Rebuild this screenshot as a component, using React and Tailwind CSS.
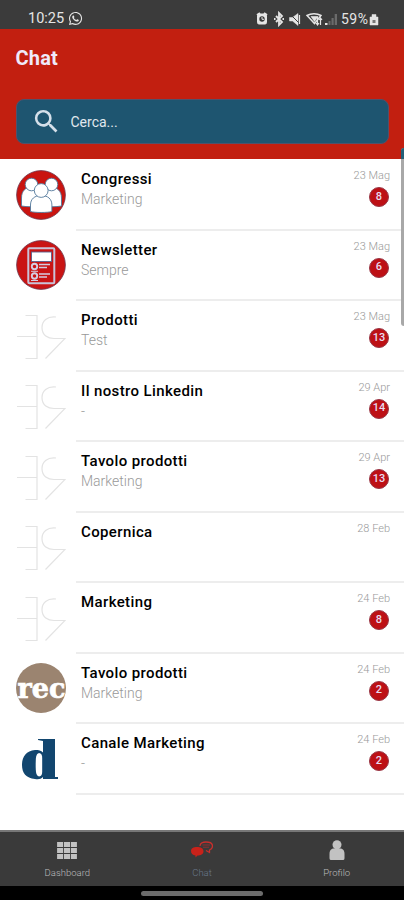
import { useState } from 'react';
import { FaWhatsapp } from 'react-icons/fa';
import { MdSearch } from 'react-icons/md';

const chats = [
  { id: 1, title: 'Congressi', subtitle: 'Marketing', date: '23 Mag', unread: 8, avatar: 'people' },
  { id: 2, title: 'Newsletter', subtitle: 'Sempre', date: '23 Mag', unread: 6, avatar: 'newsletter' },
  { id: 3, title: 'Prodotti', subtitle: 'Test', date: '23 Mag', unread: 13 },
  { id: 4, title: 'Il nostro Linkedin', subtitle: '-', date: '29 Apr', unread: 14 },
  { id: 5, title: 'Tavolo prodotti', subtitle: 'Marketing', date: '29 Apr', unread: 13 },
  { id: 6, title: 'Copernica', subtitle: '', date: '28 Feb', unread: 0 },
  { id: 7, title: 'Marketing', subtitle: '', date: '24 Feb', unread: 8 },
  { id: 8, title: 'Tavolo prodotti', subtitle: 'Marketing', date: '24 Feb', unread: 2, avatar: 'rec' },
  { id: 9, title: 'Canale Marketing', subtitle: '-', date: '24 Feb', unread: 2, avatar: 'd' },
];

const PeopleAvatar = () => (
  <svg viewBox="0 0 50 50" className="h-[50px] w-[50px]">
    <circle cx="25" cy="25" r="24.4" fill="#c91410" stroke="#6d3a50" strokeWidth="0.8" />
    <g fill="#fff" stroke="#52789b" strokeWidth="0.9">
      <path d="M5.500 36v-8c0-7 4-11 10-11s10 4 10 11v8c-5 1-15 1-20 0z" />
      <circle cx="15.5" cy="14.5" r="6.3" />
      <path d="M25 36v-8c0-7 4-11 10-11s10.500 4 10.500 11v8c-5 1-15 1-20.500 0z" />
      <circle cx="35.5" cy="14.5" r="6.3" />
      <path d="M14.500 41.500V35c0-6 4-9.500 10.700-9.500s10.700 3.500 10.700 9.500v6.500c-4 1.300-17.400 1.300-21.400 0z" />
      <circle cx="25.2" cy="20.5" r="6.9" />
    </g>
  </svg>
);

const NewsletterAvatar = () => (
  <svg viewBox="0 0 50 50" className="h-[50px] w-[50px]">
    <circle cx="25" cy="25" r="24.4" fill="#c91414" stroke="#6d3a50" strokeWidth="0.8" />
    <rect x="12.3" y="8.3" width="26" height="35" rx="1" fill="#c91414" stroke="#c9c3d8" strokeWidth="2" />
    <rect x="15.5" y="12" width="20" height="9.5" fill="#fff" stroke="#59618c" strokeWidth="0.9" />
    <g fill="none" stroke="#d5cce0" strokeWidth="1.9">
      <circle cx="18.5" cy="26.5" r="2.7" />
      <circle cx="18.5" cy="36" r="2.7" />
      <path d="M23 24.500h11M23 27.500h8M23 34h11M23 37h8" strokeWidth="1.7" />
      <path d="M15 31.300h7M15 40.500h7" strokeWidth="1" />
    </g>
  </svg>
);

const DefaultAvatar = () => (
  <svg viewBox="0 0 50 50" className="h-[50px] w-[50px]" fill="none" stroke="#e3e3e3" strokeWidth="1.2">
    <path d="M9.500 4.500h11.500v43H9.500M1 25.500h20" />
    <path d="M40 6c-9-1-14 4-14 10.500 0 8 6 11 12 11h11L29.500 47.500" />
  </svg>
);

const RecAvatar = () => (
  <svg viewBox="0 0 50 50" className="h-[50px] w-[50px]">
    <circle cx="25" cy="25" r="25" fill="#9b8470" />
    <text x="1.5" y="35" textLength="48" lengthAdjust="spacingAndGlyphs" fill="#fff" stroke="#fff" strokeWidth="0.7" className="font-['DejaVu_Serif',serif] text-[27px] font-bold">
      rec
    </text>
  </svg>
);

const LetterAvatar = () => (
  <svg viewBox="0 0 50 50" className="h-[50px] w-[50px]">
    <g fill="#12466f">
      <path d="M22 5h17v38h3v2H27v-2c-2 2-4 2.500-8 2C10 44 6 39 6 31s4-14 13-15c4 0 6 .500 8 2.500V7l-5-1z" />
      <path d="M23 19c-3 1-3.300 4-3.300 12s.500 10.500 3.300 11.500c2.500-.500 3.200-2 3.200-5V24c0-3-.800-4.500-3.200-5z" fill="#fff" />
    </g>
  </svg>
);

const avatars = {
  people: PeopleAvatar,
  newsletter: NewsletterAvatar,
  rec: RecAvatar,
  d: LetterAvatar,
};

const StatusIcons = () => (
  <svg viewBox="0 0 124 16" className="h-4 w-[124px]">
    <g fill="#e5e5e5" stroke="#e5e5e5">
      <path d="M1 4l3-2M11 4L8 2" strokeWidth="2" />
      <rect x="1.5" y="3" width="9" height="10" rx="1.5" />
      <circle cx="6" cy="8" r="2.7" fill="#383838" stroke="none" />
      <path d="M6 6v2.300h2" fill="none" strokeWidth="1" />
      <path d="M20 5l6 6-3 3V2l3 3-6 6M18 8h1.500M26.500 8H28" fill="none" strokeWidth="1.8" />
      <path d="M33.500 6.500h3l5.500-4v12l-5.500-4.500h-3z" strokeWidth="0.5" />
      <path d="M33 2l11 11" stroke="#3b3b3b" strokeWidth="1" />
      <path d="M43.500 4v9" fill="none" strokeWidth="1.2" />
      <path d="M51 4.500c4-2.500 10-2.500 14 0l-6.500 8z" fill="none" strokeWidth="1.5" />
      <path d="M55 5.500h7l-3.500 5z" strokeWidth="0.6" />
      <path d="M61.500 6v8M60 12l1.500 2 1.500-2M64.500 14V7M63 9l1.500-2L66 9" fill="none" strokeWidth="1.2" />
      <path d="M69 14v-2h2.500v2z" stroke="none" />
      <path d="M72.500 14v-4h2v4zM75.500 14V7h2.200v7zM78.700 14V3H81v11z" fill="#6b6b6b" stroke="none" />
      <path d="M114 6h2V3.500h4V6h2v8h-8z" strokeWidth="0.5" />
      <path d="M116.500 9h3v3h-3z" fill="#777" stroke="none" />
    </g>
    <text x="85" y="13" textLength="27" fill="#e5e5e5" className="font-[Roboto,sans-serif] text-[14px]">59%</text>
  </svg>
);

const DashboardIcon = () => (
  <svg viewBox="0 0 21 18" className="h-[17px] w-[20px]" fill="#c2c2c2">
    <path d="M0 0h6.400v5.400H0zM7.300 0h6.400v5.400H7.300zM14.600 0H21v5.400h-6.400zM0 6.300h6.400v5.400H0zM7.300 6.300h6.400v5.400H7.300zM14.600 6.300H21v5.400h-6.400zM0 12.600h6.400V18H0zM7.300 12.600h6.400V18H7.300zM14.600 12.600H21V18h-6.400z" />
  </svg>
);

const ChatIcon = () => (
  <svg viewBox="0 0 22 18" className="h-[18px] w-[22px]">
    <path d="M9 5c0-3 3-4 6-4 4 0 6.500 1.500 6.500 4 0 2-1.500 3.500-3 4v2.500L15 9.500" fill="none" stroke="#c92f2c" strokeWidth="1.3" />
    <path d="M11.500 4h7.500M12 6.200h6" stroke="#a52c2c" strokeWidth="0.8" />
    <path d="M0 10c0-2.700 2.500-4 6-4s6.500 1.300 6.500 4.200-3 4.300-6 4.300L4.500 16.500v-2C1.500 14 0 12.500 0 10z" fill="#c9221a" />
  </svg>
);

const ProfileIcon = () => (
  <svg viewBox="0 0 16 20" className="h-5 w-4" fill="#c2c2c2">
    <circle cx="8" cy="4.7" r="4.5" />
    <path d="M.500 18v-4c0-4 2-5.500 4.500-5.500h6c2.500 0 4.500 1.500 4.500 5.500v4c0 2-1 2-2 2h-11c-1 0-2 0-2-2z" />
  </svg>
);

const ChatRow = ({ chat }) => {
  const Avatar = avatars[chat.avatar] || DefaultAvatar;

  return (
    <li className="flex h-[70.5px] pl-[15.5px]">
      <div className="w-[60px] shrink-0 pt-[9.5px]">
        <Avatar />
      </div>
      <div className="flex min-w-0 flex-1 justify-between border-b-2 border-[#ededed] pr-[14px] pl-[5.5px]">
        <div className="pt-[9px]">
          <h2 className="text-[15px] leading-5 font-medium tracking-[0.38px] text-black">{chat.title}</h2>
          <p className="text-[14px] leading-5 font-light text-[#999]">{chat.subtitle}</p>
        </div>
        <div className="flex flex-col items-end pt-[8px]">
          <span className="text-[11px] leading-4 font-light text-[#999]">{chat.date}</span>
          {chat.unread > 0 && (
            <span className="mt-[3px] mr-px flex h-5 w-5 items-center justify-center rounded-full border border-[#993746] bg-[#bd1015] text-[11px] font-medium text-[#e7dcf0]">
              {chat.unread}
            </span>
          )}
        </div>
      </div>
    </li>
  );
};

const tabs = [
  { label: 'Dashboard', icon: DashboardIcon },
  { label: 'Chat', icon: ChatIcon },
  { label: 'Profilo', icon: ProfileIcon },
];

const App = () => {
  const [query, setQuery] = useState('');
  const visible = chats.filter((chat) => chat.title.toLowerCase().includes(query.toLowerCase()));

  return (
    <div className="relative flex h-[900px] w-[404px] flex-col overflow-hidden bg-white font-[Roboto,sans-serif]">
      <div className="flex h-[29px] shrink-0 items-center justify-between bg-[#3b3b3b] pt-[8px] pr-[24px] pl-[28px] text-[#e5e5e5]">
        <div className="flex items-center gap-1">
          <span className="text-[14.5px] leading-4">10:25</span>
          <FaWhatsapp className="h-[15px] w-[15px]" />
        </div>
        <StatusIcons />
      </div>

      <header className="h-[130px] shrink-0 bg-[#c21f10] px-[15.5px] pt-[17px]">
        <h1 className="text-[20px] leading-6 font-bold tracking-[0.2px] text-[#efeafa]">Chat</h1>
        <label className="mt-[29px] flex h-[45px] items-center rounded-lg border border-[#51516a] bg-[#1e5570] pl-[14px]">
          <MdSearch className="h-[31px] w-[31px] text-[#d5e0ea]" />
          <input
            value={query}
            onChange={(e) => setQuery(e.target.value)}
            placeholder="Cerca..."
            className="ml-[9px] w-60 bg-transparent pt-px text-[14px] text-white outline-none placeholder:text-[#e1e8ee]"
          />
        </label>
      </header>

      <main className="min-h-0 flex-1">
        <ul className="pt-[1.2px]">
          {visible.map((chat) => (
            <ChatRow key={chat.id} chat={chat} />
          ))}
        </ul>
      </main>

      {/* scroll indicator */}
      <div className="absolute top-[148px] right-0 h-[178px] w-[3px] rounded-l bg-[#a8a8a8]">
        <div className="h-[11px] rounded-tl bg-[#246078]" />
      </div>

      <nav className="flex h-[56px] shrink-0 border-t-2 border-[#777] bg-[#3a3a3a]">
        {tabs.map((tab) => (
          <button key={tab.label} type="button" className="flex flex-1 flex-col items-center pt-[8px]">
            <span className="flex h-5 items-center">
              <tab.icon />
            </span>
            <span className={`mt-[5px] text-[9.5px] leading-4 font-light ${tab.label === 'Chat' ? 'text-[#69788b]' : 'text-[#bdbdbd]'}`}>
              {tab.label}
            </span>
          </button>
        ))}
      </nav>
      <div className="flex h-[14px] shrink-0 justify-center bg-black pt-[5px]">
        <div className="h-[5px] w-[122px] rounded-full bg-[#6b6b6b]" />
      </div>
    </div>
  );
};

export default App;
